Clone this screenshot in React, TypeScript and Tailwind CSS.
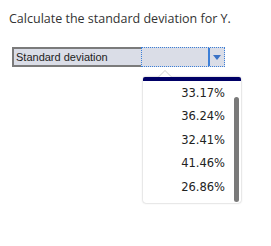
import React from 'react';

const options = ['33.17%', '36.24%', '32.41%', '41.46%', '26.86%'];

export default function App() {
  return (
    <main className="relative h-[246px] w-[271px] bg-white font-['Liberation_Sans',Arial,sans-serif]">
      <p className="pl-[9px] pt-[10px] font-['Open_Sans',sans-serif] text-[12.5px] leading-[17px] text-[#333]">
        Calculate the standard deviation for Y.
      </p>

      <div className="ml-[12px] mt-[20px] flex h-[20px] w-[213px]">
        <div className="flex w-[129px] items-center border-2 border-r-0 border-[#7b7b7b] bg-[#dadde7] pl-[2px] text-[11px] text-[#222]">
          Standard deviation
        </div>
        <div className="flex flex-1 border border-dotted border-[#3c7fd8] bg-[#dadde7]">
          <div className="flex-1" />
          <div className="flex w-[16px] items-center justify-center border-l-2 border-[#3c7fd8]">
            <svg width="8" height="5" viewBox="0 0 8 5">
              <path d="M0 0 H8 L4 5 Z" fill="#3a72c6" />
            </svg>
          </div>
        </div>
      </div>

      {/* popup list */}
      <div className="absolute left-[143px] top-[77px] flex h-[126px] w-[98px] flex-col rounded-[3px] bg-white shadow-[0_0_2px_rgba(0,0,0,0.35)]">
        <div className="absolute -top-[7px] left-[15px] h-0 w-0 border-x-[7px] border-b-[7px] border-x-transparent border-b-[#d0d0d0]" />
        <div className="absolute -top-[6px] left-[16px] h-0 w-0 border-x-[6px] border-b-[6px] border-x-transparent border-b-white" />
        <div className="h-[4px] rounded-t-[2px] bg-[#000066]" />
        <div className="flex flex-1 gap-[9px] pr-[2px]">
          <ul className="flex-1 pt-[1px] text-right font-['DejaVu_Sans',Verdana,sans-serif] text-[11.5px] text-[#222]">
            {options.map((o) => (
              <li key={o} className="h-[23.4px] leading-[23.4px]">
                {o}
              </li>
            ))}
          </ul>
          <div className="mb-[1px] mt-[16px] w-[5px] rounded-full bg-[#7a7a7a]" />
        </div>
      </div>
    </main>
  );
}
